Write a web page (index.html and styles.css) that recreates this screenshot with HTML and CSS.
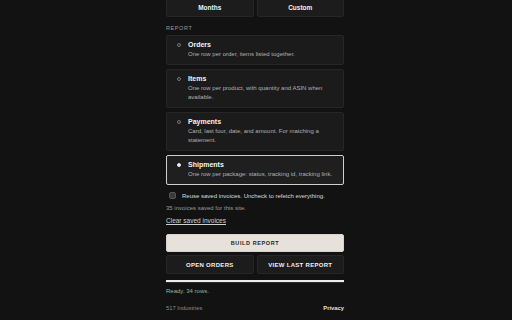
FILE: index.html
```html
<!DOCTYPE html>
<html lang="en">
  <head>
    <meta charset="UTF-8" />
    <meta name="viewport" content="width=device-width, initial-scale=1.0" />
    <title>Order Export</title>
    <link rel="stylesheet" href="styles.css">
  </head>
  <body>
    <main class="panel">
      <!-- Range -->
      <div class="btn-row range-row">
        <button class="btn ghost">Months</button>
        <button class="btn ghost">Custom</button>
      </div>

      <h2 class="label">Report</h2>

      <!-- Report types -->
      <section class="options">
        <div class="option">
          <span class="radio"></span>
          <div class="option-text">
            <h3>Orders</h3>
            <p>One row per order, items listed together.</p>
          </div>
        </div>
        <div class="option">
          <span class="radio"></span>
          <div class="option-text">
            <h3>Items</h3>
            <p>One row per product, with quantity and ASIN when available.</p>
          </div>
        </div>
        <div class="option">
          <span class="radio"></span>
          <div class="option-text">
            <h3>Payments</h3>
            <p>Card, last four, date, and amount. For matching a statement.</p>
          </div>
        </div>
        <div class="option selected">
          <span class="radio"></span>
          <div class="option-text">
            <h3>Shipments</h3>
            <p>One row per package: status, tracking id, tracking link.</p>
          </div>
        </div>
      </section>

      <label class="check">
        <span class="box"></span>
        Reuse saved invoices. Uncheck to refetch everything.
      </label>
      <p class="muted">35 invoices saved for this site.</p>
      <a class="clear" href="#">Clear saved invoices</a>

      <button class="btn primary">Build report</button>
      <div class="btn-row">
        <button class="btn ghost caps">Open orders</button>
        <button class="btn ghost caps">View last report</button>
      </div>

      <div class="progress"><div class="bar" style="width: 100%"></div></div>
      <p class="status">Ready. 34 rows.</p>

      <footer class="footer">
        <span>517 Industries</span>
        <a href="#">Privacy</a>
      </footer>
    </main>
  </body>
</html>
```

FILE: styles.css
```css
* {
  margin: 0;
  padding: 0;
  box-sizing: border-box;
}

html,
body {
  height: 100%;
  width: 100%;
}

body {
  background: #121212;
  color: #e6e6e6;
  font-family: "Liberation Sans", Arial, sans-serif;
  overflow: hidden;
}

.panel {
  width: 178px;
  margin: -2px auto 0 166px;
  display: flex;
  flex-direction: column;
}

.btn-row {
  display: flex;
  gap: 3px;
}

.btn {
  font-family: inherit;
  cursor: pointer;
  border-radius: 2px;
}

.btn.ghost {
  flex: 1;
  height: 19px;
  background: #1c1c1c;
  border: 1px solid #262626;
  color: #f0f0f0;
  font-size: 6.5px;
  font-weight: bold;
}

.btn.caps {
  text-transform: uppercase;
  letter-spacing: 0.3px;
  font-size: 6px;
}

.label {
  margin-top: 8px;
  font-size: 5.5px;
  font-weight: normal;
  letter-spacing: 0.6px;
  text-transform: uppercase;
  color: #9a9a9a;
}

.options {
  margin-top: 4px;
  display: flex;
  flex-direction: column;
  gap: 4px;
}

.option {
  display: flex;
  align-items: flex-start;
  gap: 7px;
  padding: 5px 8px 5px 10px;
  background: #1b1b1b;
  border: 1px solid #262626;
  border-radius: 2px;
}

.option.selected {
  background: #1f1f1f;
  border-color: #cfcfcf;
}

.radio {
  flex: none;
  width: 4px;
  height: 4px;
  margin-top: 2px;
  border: 1px solid #777;
  border-radius: 50%;
}

.option.selected .radio {
  background: #e8e8e8;
  border-color: #e8e8e8;
}

.option-text h3 {
  font-size: 7px;
  font-weight: bold;
  color: #f4f4f4;
  line-height: 8px;
}

.option-text p {
  margin-top: 1px;
  font-size: 6px;
  line-height: 9px;
  color: #b0b0b0;
}

.check {
  margin-top: 7px;
  display: flex;
  align-items: center;
  gap: 6px;
  padding-left: 3px;
  font-size: 6px;
  color: #dcdcdc;
}

.box {
  width: 7px;
  height: 7px;
  border-radius: 2px;
  background: #3a3a3a;
  border: 1px solid #555;
}

.muted {
  margin-top: 6px;
  font-size: 6px;
  color: #9a9a9a;
}

.clear {
  margin-top: 6px;
  align-self: flex-start;
  font-size: 6.5px;
  color: #d0d0d0;
}

.btn.primary {
  margin-top: 10px;
  height: 18px;
  background: #e6e2db;
  border: 1px solid #d6d2ca;
  color: #262626;
  font-size: 5.5px;
  font-weight: bold;
  letter-spacing: 0.6px;
  text-transform: uppercase;
}

.btn.primary + .btn-row {
  margin-top: 3px;
}

.progress {
  margin-top: 6px;
  height: 3px;
  background: #2a2a2a;
}

.progress .bar {
  height: 2px;
  background: #ececec;
}

.status {
  margin-top: 5px;
  font-size: 6px;
  color: #8fbb8f;
}

.footer {
  margin-top: 11px;
  display: flex;
  justify-content: space-between;
  font-size: 5.8px;
  color: #8a8a8a;
}

.footer a {
  color: #e0e0e0;
  text-decoration: none;
  font-weight: bold;
}
```
